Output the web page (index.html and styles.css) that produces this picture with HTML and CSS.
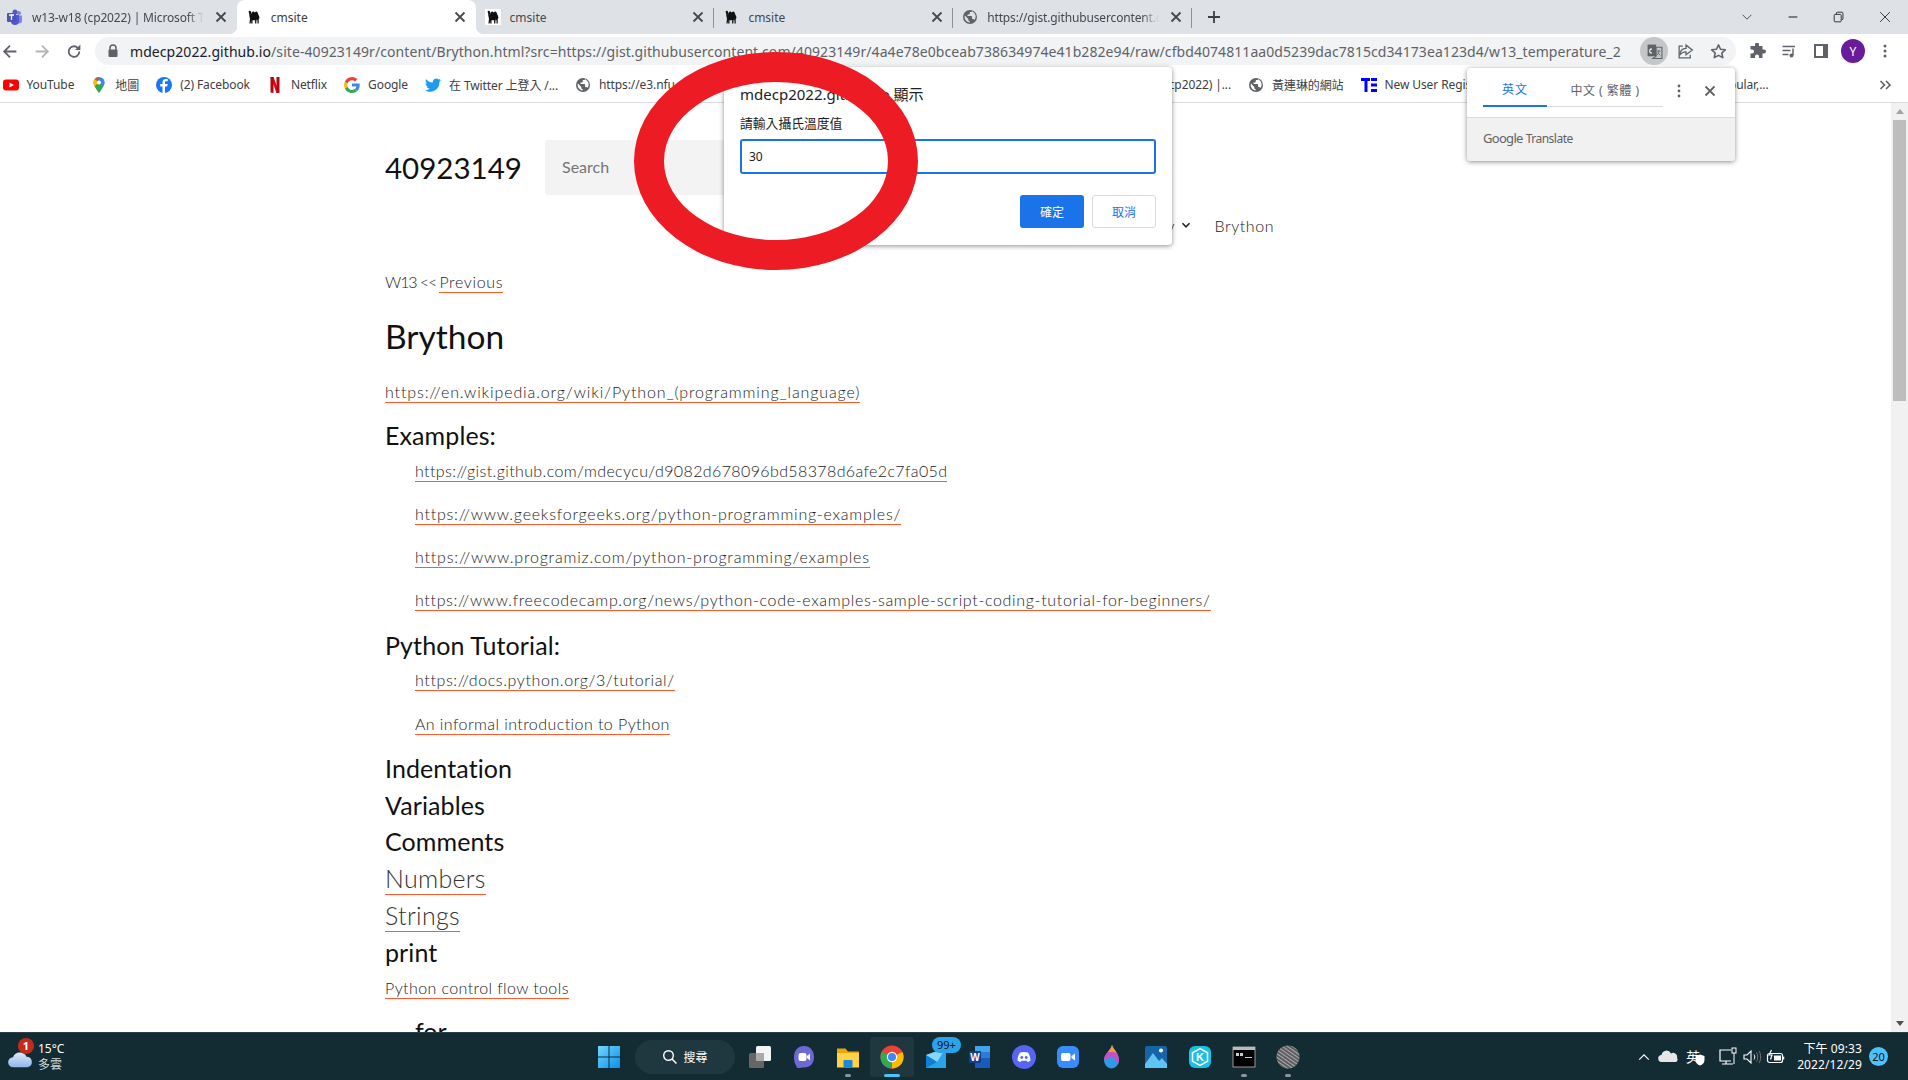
FILE: index.html
```html
<!DOCTYPE html>
<html lang="zh-Hant">
<head>
<meta charset="utf-8">
<title>cmsite</title>
<link rel="stylesheet" href="styles.css">
</head>
<body>
<svg class="defs" width="0" height="0">
  <symbol id="camel" viewBox="0 0 16 16"><path d="M2.5 2.5c.8-1.2 2.3-.8 2.6.4.3 1.200-.3 1.800-.3 3 .6-1.800 1.500-3.600 2.700-3.300.6.200.8.800 1.200.8.500 0 .7-1.200 1.800-1 1.400.3 1.500 2.700 2.300 4.200.5 1 .8 1.900.4 2.900l-.5.500v4.500h-1.200v-3.100l-.9-1-.3 4.100H9.100v-3.300H6.500v3.300H5.200v-3.300l-.6 3.300H3.400l.6-4.800C3.300 7.300 3.200 5.500 3.100 4.200z"/></symbol>
  <symbol id="globe" viewBox="0 0 16 16"><path fill-rule="evenodd" d="M8 1a7 7 0 1 0 0 14A7 7 0 0 0 8 1zM2.600 8c0-.6.100-1.100.3-1.600L6.300 10v.8c0 .8.700 1.500 1.500 1.500v1.100A5.400 5.400 0 0 1 2.600 8zm9.700 3.100c-.2-.6-.8-1.100-1.400-1.100h-.8V7.700a.8.8 0 0 0-.8-.8H5.500V5.400h1.500c.5 0 .8-.4.800-.8V3h1.100c.8 0 1.500-.7 1.500-1.500l0 1.100a5.400 5.400 0 0 1 1.900 8.500z"/></symbol>
  <symbol id="x" viewBox="0 0 16 16"><path d="M3.500 3.500l9 9m0-9l-9 9" fill="none" stroke="currentColor" stroke-width="1.800"/></symbol>
</svg>

<div class="browser">
  <div class="tabstrip">
    <div class="tab tab-sep">
      <svg class="fav" viewBox="0 0 16 16"><circle cx="12" cy="4" r="2" fill="#7b83eb"/><path d="M9 6.500h6v5a3 3 0 0 1-6 0z" fill="#7b83eb"/><circle cx="8" cy="3" r="2.500" fill="#5059c9"/><path d="M4 6h8v6a4 4 0 0 1-8 0z" fill="#5059c9"/><rect x="0" y="4" width="9" height="9" rx="1" fill="#4b53bc"/><path d="M2 6h5M4.500 6v5" stroke="#fff" stroke-width="1.300"/></svg>
      <span class="tab-title fade">w13-w18 (cp2022) | Microsoft Teams</span>
      <svg class="tab-x"><use href="#x"/></svg>
    </div>
    <div class="tab active">
      <svg class="fav"><use href="#camel"/></svg>
      <span class="tab-title">cmsite</span>
      <svg class="tab-x"><use href="#x"/></svg>
    </div>
    <div class="tab tab-sep">
      <svg class="fav fav-white"><use href="#camel"/></svg>
      <span class="tab-title">cmsite</span>
      <svg class="tab-x"><use href="#x"/></svg>
    </div>
    <div class="tab tab-sep">
      <svg class="fav"><use href="#camel"/></svg>
      <span class="tab-title">cmsite</span>
      <svg class="tab-x"><use href="#x"/></svg>
    </div>
    <div class="tab tab-sep">
      <svg class="fav gray"><use href="#globe"/></svg>
      <span class="tab-title fade">https://gist.githubusercontent.com/40923149r</span>
      <svg class="tab-x"><use href="#x"/></svg>
    </div>
    <svg class="newtab" viewBox="0 0 16 16"><path d="M8 2v12M2 8h12" stroke="#3c4043" stroke-width="1.800"/></svg>
    <div class="winctl">
      <svg viewBox="0 0 16 16"><path d="M3 5.500l5 5 5-5" fill="none" stroke="#3c4043"/></svg>
      <svg viewBox="0 0 16 16"><path d="M3 8h10" stroke="#222" stroke-width="1.200"/></svg>
      <svg viewBox="0 0 16 16"><path d="M5 5V3.500C5 3 5.400 2.500 6 2.500h5.500c.6 0 1 .5 1 1V10c0 .6-.4 1-1 1H11M3.500 5h6c.6 0 1 .4 1 1v6.500c0 .6-.4 1-1 1h-6c-.6 0-1-.4-1-1V6c0-.6.4-1 1-1z" fill="none" stroke="#222"/></svg>
      <svg viewBox="0 0 16 16"><path d="M2.500 2.500l11 11m0-11l-11 11" stroke="#222"/></svg>
    </div>
  </div>

  <div class="toolbar">
    <div class="navbtns">
      <svg viewBox="0 0 16 16"><path d="M14 8H3M8 2.500L2.500 8 8 13.500" fill="none" stroke="#5f6368" stroke-width="1.700"/></svg>
      <svg viewBox="0 0 16 16"><path d="M2 8h11M8 2.500L13.500 8 8 13.500" fill="none" stroke="#b3b5b8" stroke-width="1.700"/></svg>
      <svg viewBox="0 0 16 16"><path d="M13 8a5 5 0 1 1-1.500-3.500" fill="none" stroke="#5f6368" stroke-width="1.700"/><path d="M14 1.500v5H9z" fill="#5f6368"/></svg>
    </div>
    <div class="omnibox">
      <svg class="lock" viewBox="0 0 16 16"><path d="M5 7V5a3 3 0 0 1 6 0v2" fill="none" stroke="#5f6368" stroke-width="1.500"/><rect x="3.500" y="6.500" width="9" height="7.500" rx="1" fill="#5f6368"/></svg>
      <div class="url"><b>mdecp2022.github.io</b>/site-40923149r/content/Brython.html?src=https://gist.githubusercontent.com/40923149r/4a4e78e0bceab738634974e41b282e94/raw/cfbd4074811aa0d5239dac7815cd34173ea123d4/w13_temperature_2</div>
      <div class="omni-tr">
        <svg viewBox="0 0 16 16"><rect x="1.500" y="1.500" width="8" height="11" fill="#5f6368"/><path d="M9.500 4h5.500v10.500H6.500l3-2z" fill="none" stroke="#5f6368"/><path d="M5.500 9.500a2 2 0 1 1 0-4" fill="none" stroke="#fff"/><path d="M10.500 7.500h3M12 7v1c0 1.500-1 3-2 3.500M11 9c.5 1 1.500 2 2.500 2.500" fill="none" stroke="#5f6368" stroke-width=".8"/></svg>
      </div>
      <svg class="omni-ic" viewBox="0 0 16 16"><path d="M8.500 2l6 4.500-6 4.500V8.300C5.500 8.300 3.800 9.500 2.500 11.500c.3-4 2.500-6.300 6-6.500z" fill="none" stroke="#5f6368" stroke-width="1.200"/><path d="M5.500 3H2v11h10.500v-3" fill="none" stroke="#5f6368" stroke-width="1.200"/></svg>
      <svg class="omni-ic" viewBox="0 0 16 16"><path d="M8 1.800l1.900 4.100 4.500.5-3.300 3 .9 4.400L8 11.600l-4 2.200.9-4.400-3.300-3 4.500-.5z" fill="none" stroke="#5f6368" stroke-width="1.500" stroke-linejoin="round"/></svg>
    </div>
    <div class="exts">
      <svg viewBox="0 0 16 16"><path d="M6 1.500a2 2 0 0 1 4 0V3h3.500v3.500H15a2 2 0 0 1 0 4h-1.500V15H10v-1.500a2 2 0 0 0-4 0V15H1.500v-4.500H3a2 2 0 0 0 0-4H1.500V3H6z" fill="#5f6368"/></svg>
      <svg viewBox="0 0 16 16"><path d="M1.500 3.500H14M1.500 7.500h8M1.500 11.500h6" stroke="#5f6368" stroke-width="1.500"/><path d="M12 5.500V12" stroke="#5f6368" stroke-width="1.500"/><circle cx="10.500" cy="12.500" r="2" fill="#5f6368"/></svg>
      <svg viewBox="0 0 16 16"><rect x="1" y="1" width="14" height="14" fill="#5f6368"/><rect x="3" y="3" width="7" height="10" fill="#fff"/></svg>
      <div class="avatar">Y</div>
      <svg viewBox="0 0 16 16"><circle cx="8" cy="3" r="1.500" fill="#5f6368"/><circle cx="8" cy="8" r="1.500" fill="#5f6368"/><circle cx="8" cy="13" r="1.500" fill="#5f6368"/></svg>
    </div>
  </div>

  <div class="bookmarks">
    <div class="bm"><svg viewBox="0 0 16 16"><rect x="0" y="2.500" width="16" height="11" rx="3" fill="#f00"/><path d="M6.500 5.500L11 8l-4.500 2.500z" fill="#fff"/></svg><span>YouTube</span></div>
    <div class="bm"><svg viewBox="0 0 16 16"><path d="M8 0a5.500 5.500 0 0 0-5.500 5.500C2.500 9.500 8 16 8 16s5.500-6.500 5.500-10.500A5.500 5.500 0 0 0 8 0z" fill="#34a853"/><path d="M4 2L12 9.500c.8-1.400 1.500-2.800 1.500-4A5.500 5.500 0 0 0 11 1z" fill="#4285f4"/><path d="M2.500 5.500c0 1 .5 2.400 1.200 3.700L8 5.500 4 2a5.500 5.500 0 0 0-1.500 3.500z" fill="#fbbc04"/><path d="M8 0a5.500 5.500 0 0 0-4 2l2.300 2z" fill="#ea4335"/><circle cx="8" cy="5.500" r="2" fill="#fff"/></svg><span>地圖</span></div>
    <div class="bm"><svg viewBox="0 0 16 16"><circle cx="8" cy="8" r="8" fill="#1877f2"/><path d="M9 16V9.500h2.200l.4-2.500H9V5.500c0-.8.300-1.300 1.400-1.300h1.300V2c-.5 0-1.200-.1-1.900-.1-2 0-3.300 1.200-3.300 3.300V7H4.200v2.500h2.300V16z" fill="#fff"/></svg><span>(2) Facebook</span></div>
    <div class="bm"><svg viewBox="0 0 16 16"><path d="M3.500 0h3l6 16h-3z" fill="#e50914"/><path d="M3.500 0h3v16l-3-.6zM9.500 0h3v15.400l-3 .6z" fill="#b1060f"/></svg><span>Netflix</span></div>
    <div class="bm"><svg viewBox="0 0 16 16"><path d="M15.700 8.200c0-.6 0-1.100-.1-1.600H8v3h4.400a3.700 3.700 0 0 1-1.600 2.500l2.500 1.900c1.500-1.400 2.400-3.400 2.400-5.800z" fill="#4285f4"/><path d="M8 16c2.200 0 4-.7 5.300-2l-2.500-1.900c-.7.500-1.600.8-2.800.8-2.100 0-3.900-1.400-4.500-3.400L.9 11.500A8 8 0 0 0 8 16z" fill="#34a853"/><path d="M3.500 9.500a4.800 4.800 0 0 1 0-3L.9 4.500a8 8 0 0 0 0 7z" fill="#fbbc04"/><path d="M8 3.200c1.200 0 2.200.4 3 1.200l2.300-2.300A8 8 0 0 0 .9 4.500l2.600 2C4.100 4.600 5.900 3.200 8 3.200z" fill="#ea4335"/></svg><span>Google</span></div>
    <div class="bm"><svg viewBox="0 0 16 16"><path d="M16 3.100c-.6.300-1.200.4-1.900.5.700-.4 1.200-1 1.400-1.800-.6.400-1.300.7-2 .8a3.300 3.300 0 0 0-5.600 3C5.200 5.500 2.800 4.200 1.100 2.200c-.9 1.500-.4 3.400 1 4.400-.5 0-1-.2-1.500-.4 0 1.600 1.100 3 2.600 3.300-.5.100-1 .1-1.500 0 .4 1.300 1.600 2.200 3.100 2.300A6.600 6.600 0 0 1 0 13.200 9.300 9.300 0 0 0 14.400 5c.6-.5 1.200-1.100 1.600-1.900z" fill="#1d9bf0"/></svg><span>在 Twitter 上登入 /...</span></div>
    <div class="bm"><svg class="gray"><use href="#globe"/></svg><span>https://e3.nfu.edu.tw</span></div>
    <div class="bm bm-mid"><span>w13-w18 (cp2022) |...</span></div>
    <div class="bm"><svg class="gray"><use href="#globe"/></svg><span>黃連琳的網站</span></div>
    <div class="bm bm-new"><svg viewBox="0 0 16 16"><path d="M0 1h9v3H6.500v11h-3V4H0zM10 1h6v3h-6zM10 6.500h6v3h-6zM10 12h6v3h-6z" fill="#00f"/></svg><span>New User Registration</span></div>
    <div class="bm bm-last"><span>Popular,...</span></div>
    <svg class="more" viewBox="0 0 16 16"><path d="M3.500 4l4 4-4 4M9 4l4 4-4 4" fill="none" stroke="#5f6368" stroke-width="1.600"/></svg>
  </div>

  <div class="viewport">
    <main class="page">
      <header class="site-head">
        <div class="brand">40923149</div>
        <div class="search">Search</div>
        <nav class="nav">
          <span>Summary</span>
          <svg class="caret" viewBox="0 0 10 10"><path d="M1.500 3.200L5 6.800l3.500-3.600" fill="none" stroke="#222" stroke-width="1.500"/></svg>
          <span class="nav-link">Brython</span>
        </nav>
      </header>
      <p class="crumb">W13 &lt;&lt; <a href="#">Previous</a></p>
      <h1 class="title">Brython</h1>
      <p class="wiki"><a href="#">https://en.wikipedia.org/wiki/Python_(programming_language)</a></p>
      <h2 class="sec sec-ex">Examples:</h2>
      <ul class="links links-ex">
        <li class="sp-gist"><a href="#">https://gist.github.com/mdecycu/d9082d678096bd58378d6afe2c7fa05d</a></li>
        <li class="sp-geeks"><a href="#">https://www.geeksforgeeks.org/python-programming-examples/</a></li>
        <li class="sp-prog"><a href="#">https://www.programiz.com/python-programming/examples</a></li>
        <li class="sp-fcc"><a href="#">https://www.freecodecamp.org/news/python-code-examples-sample-script-coding-tutorial-for-beginners/</a></li>
      </ul>
      <h2 class="sec sec-tut">Python Tutorial:</h2>
      <ul class="links links-tut">
        <li class="sp-docs"><a href="#">https://docs.python.org/3/tutorial/</a></li>
        <li class="sp-intro"><a href="#">An informal introduction to Python</a></li>
      </ul>
      <div class="topics">
        <h3>Indentation</h3>
        <h3>Variables</h3>
        <h3>Comments</h3>
        <h3><a href="#">Numbers</a></h3>
        <h3><a href="#">Strings</a></h3>
        <h3>print</h3>
      </div>
      <p class="flow"><a href="#">Python control flow tools</a></p>
      <h3 class="sub">for</h3>
    </main>
    <div class="scrollbar">
      <div class="arrow-up"></div>
      <div class="thumb"></div>
      <div class="arrow-down"></div>
    </div>
  </div>
</div>

<footer class="taskbar">
  <div class="weather">
    <div class="cloud">
      <svg viewBox="0 0 28 24"><path d="M7 21a5.500 5.500 0 0 1-.5-11A8 8 0 0 1 21 9.500 5.800 5.800 0 0 1 22 21z" fill="url(#cl)"/><defs><linearGradient id="cl" x1="0" y1="0" x2="0" y2="1"><stop offset="0" stop-color="#dfe9f7"/><stop offset="1" stop-color="#8fb6ea"/></linearGradient></defs></svg>
      <span class="wbadge">1</span>
    </div>
    <div class="wtext"><span>15°C</span><span class="wdim">多雲</span></div>
  </div>
  <div class="apps">
    <div class="app"><svg viewBox="0 0 24 24"><defs><linearGradient id="w" x1="0" y1="0" x2="1" y2="1"><stop offset="0" stop-color="#6fd8ff"/><stop offset="1" stop-color="#0a8fe8"/></linearGradient></defs><path d="M1 1h10.500v10.500H1zM12.500 1H23v10.500H12.500zM1 12.500h10.500V23H1zM12.500 12.500H23V23H12.500z" fill="url(#w)"/></svg></div>
    <div class="pill"><svg viewBox="0 0 16 16"><circle cx="6.500" cy="6.500" r="4.800" fill="none" stroke="#fff" stroke-width="1.400"/><path d="M10 10l4.500 4.500" stroke="#fff" stroke-width="1.500"/></svg><span>搜尋</span></div>
    <div class="app"><svg viewBox="0 0 24 24"><rect x="1" y="8" width="15" height="15" rx="1.500" fill="#666"/><rect x="8" y="1" width="15" height="15" rx="1.500" fill="#f4f4f4"/><rect x="8" y="8" width="8" height="8" fill="#aaa"/></svg></div>
    <div class="app"><svg viewBox="0 0 24 24"><path d="M12 1c6 0 10 4.500 10 11s-4 10.500-10 10.500c-1.500 0-4 .5-6 .5-1.500 0-1.500-1-1.500-2C2.500 19 2 15.500 2 12 2 5.500 6 1 12 1z" fill="#6b69d6"/><rect x="6.500" y="8" width="8" height="8" rx="2" fill="#fff"/><path d="M15 11l3-2.500v7L15 13z" fill="#fff"/></svg></div>
    <div class="app dot"><svg viewBox="0 0 24 24"><path d="M1 3.500h8.500l2.500 3H23v4H1z" fill="#e8a80c"/><path d="M1 8h22v14.500H1z" fill="#ffd24a"/><rect x="7.500" y="15" width="9" height="7.500" rx="1" fill="#1e88d6"/></svg></div>
    <div class="app running"><svg viewBox="0 0 24 24"><circle cx="12" cy="12" r="11.500" fill="#ea4335"/><path d="M12 12L22.500 7A11.500 11.500 0 0 1 12 23.500z" fill="#fbbc04"/><path d="M12 12L12 23.500A11.500 11.500 0 0 1 1.800 6.500z" fill="#34a853"/><circle cx="12" cy="12" r="5.200" fill="#fff"/><circle cx="12" cy="12" r="4" fill="#4285f4"/></svg></div>
    <div class="app"><svg viewBox="0 0 24 24"><path d="M2 10L22 3v20H2z" fill="#2aa3ea"/><path d="M2 10l11 7 9-14z" fill="#8ad4f7"/><path d="M2 10l11 7-11 6z" fill="#0f7fd4"/></svg><span class="mailbadge">99+</span></div>
    <div class="app"><svg viewBox="0 0 24 24"><path d="M7 1h15v22H7z" fill="#185abd"/><path d="M7 1h15v6H7z" fill="#41a5ee"/><path d="M7 7h15v6H7z" fill="#2b7cd3"/><rect x="1" y="6" width="12" height="12" rx="1" fill="#103f91"/><text x="7" y="15.500" class="wordw">W</text></svg></div>
    <div class="app"><svg viewBox="0 0 24 24"><circle cx="12" cy="12" r="12" fill="#5865f2"/><path d="M8 7.500c2.500-.8 5.500-.8 8 0 1.500 2 2.500 5 2.500 8-1 .8-2 1.200-3 1.500l-.8-1.300H9.300L8.500 17c-1-.3-2-.7-3-1.500 0-3 1-6 2.500-8z" fill="#fff"/><circle cx="9.800" cy="12.500" r="1.400" fill="#5865f2"/><circle cx="14.200" cy="12.500" r="1.400" fill="#5865f2"/></svg></div>
    <div class="app"><svg viewBox="0 0 24 24"><rect x="1" y="1" width="22" height="22" rx="6" fill="#3a8bfb"/><rect x="5" y="8" width="9.500" height="8" rx="2" fill="#fff"/><path d="M15.500 11l3.500-2.500v7L15.500 13z" fill="#fff"/></svg></div>
    <div class="app"><svg viewBox="0 0 24 24"><path d="M12 0c1 4 7 8 7 15a7.500 8.500 0 0 1-15 0C4 9 11 5 12 0z" fill="#2f9be8"/><path d="M12 0c1 4 7 8 7 15 0 2-.6 3.500-1.500 5C17 14 12 10 10 12 7.500 14 6 15 4 15c0-6 7-10 8-15z" fill="#c94fc0"/><path d="M12 0c.5 2.500 3 5 4.500 8C13 6 11 7 8 7c2-2 3.500-4.500 4-7z" fill="#f4a12a"/></svg></div>
    <div class="app"><svg viewBox="0 0 24 24"><rect x="1" y="1" width="22" height="22" rx="2" fill="#1565a8"/><path d="M1 23V19L9 8l6 8 3-3 5 6v4z" fill="#5ec4f4"/><circle cx="17" cy="5.500" r="2" fill="#fff"/></svg></div>
    <div class="app"><svg viewBox="0 0 24 24"><rect x="1" y="1" width="22" height="22" rx="6" fill="#19c0e8"/><path d="M12 3.500l7.500 4.300v8.400L12 20.500l-7.500-4.300V7.800z" fill="none" stroke="#fff" stroke-width="1.500"/><text x="12" y="16" class="kk">K</text></svg></div>
    <div class="app dot"><svg viewBox="0 0 24 24"><rect x="1" y="2" width="22" height="20" fill="#000" stroke="#999"/><rect x="1" y="2" width="22" height="3" fill="#bbb"/><path d="M4 8h3v3H4zM8 8h3v3H8zM13 12h7v1h-7z" fill="#ccc"/></svg></div>
    <div class="app dot"><svg viewBox="0 0 24 24"><defs><pattern id="st" width="3" height="3" patternUnits="userSpaceOnUse" patternTransform="rotate(35)"><rect width="3" height="3" fill="#555"/><rect width="3" height="1.200" fill="#aaa"/></pattern></defs><circle cx="12" cy="12" r="11.500" fill="url(#st)"/></svg></div>
  </div>
  <div class="tray">
    <svg class="t-chev" viewBox="0 0 16 16"><path d="M2.500 11L8 5.500l5.500 5.500" fill="none" stroke="#fff" stroke-width="1.300"/></svg>
    <svg class="t-ic" viewBox="0 0 20 16"><path d="M4 13a3.500 3.500 0 0 1-.5-7A5 5 0 0 1 13 4.500 4 4 0 0 1 19 9a2.500 2.500 0 0 1-1 4z" fill="#e6e6e6"/></svg>
    <div class="t-lang"><span>英</span><svg viewBox="0 0 10 12"><path d="M5 .5l4.500 1.500v4c0 3-2 4.500-4.500 5.500C2.500 10.500.5 9 .5 6V2z" fill="#fff"/></svg></div>
    <svg class="t-ic" viewBox="0 0 20 20"><path d="M13 3H2v11h11M8 14v3M4 17h11" fill="none" stroke="#fff" stroke-width="1.200"/><rect x="14" y="1" width="4" height="5" fill="none" stroke="#fff"/><path d="M16 6v11" stroke="#fff"/></svg>
    <svg class="t-ic" viewBox="0 0 20 16"><path d="M2 6h3l4-4v12l-4-4H2z" fill="none" stroke="#fff" stroke-width="1.100"/><path d="M12 5.500c1 1.500 1 3.500 0 5" fill="none" stroke="#fff"/><path d="M14.500 3.500c1.700 2.700 1.700 6.300 0 9M17 2c2.200 3.500 2.200 8.500 0 12" fill="none" stroke="#777"/></svg>
    <svg class="t-ic" viewBox="0 0 20 16"><rect x="1.500" y="4.500" width="15" height="9" rx="2" fill="none" stroke="#fff" stroke-width="1.200"/><rect x="8" y="6.500" width="7" height="5" fill="#fff"/><path d="M17.500 7.500v3" stroke="#fff" stroke-width="1.500"/><path d="M5.500 1L3 6h3L4.500 10.500" fill="none" stroke="#fff" stroke-width="1.200"/></svg>
    <div class="clock"><span>下午 09:33</span><span>2022/12/29</span></div>
    <div class="notif">20</div>
  </div>
</footer>

<div class="dialog">
  <div class="dlg-title">mdecp2022.github.io 顯示</div>
  <div class="dlg-label">請輸入攝氏溫度值</div>
  <div class="dlg-input">30</div>
  <div class="dlg-btns">
    <div class="btn btn-ok">確定</div>
    <div class="btn btn-cancel">取消</div>
  </div>
</div>

<div class="ring"></div>

<div class="translate">
  <div class="tr-top">
    <div class="tr-tabs">
      <div class="tr-tab on">英文</div>
      <div class="tr-tab">中文 ( 繁體 )</div>
    </div>
    <svg class="tr-ic" viewBox="0 0 16 16"><circle cx="8" cy="3" r="1.400" fill="#5f6368"/><circle cx="8" cy="8" r="1.400" fill="#5f6368"/><circle cx="8" cy="13" r="1.400" fill="#5f6368"/></svg>
    <svg class="tr-ic tr-close"><use href="#x"/></svg>
  </div>
  <div class="tr-foot"><span class="gl">Google</span> <span class="tl">Translate</span></div>
</div>
</body>
</html>
```
FILE: styles.css
```css
* { box-sizing: border-box; }
html, body { margin: 0; padding: 0; height: 1080px; overflow: hidden; background: #fff; }
body { font-family: "Noto Sans", "Noto Sans CJK TC", sans-serif; color: #202124; position: relative; }
.defs { position: absolute; }
svg { display: block; flex: none; }

.browser { height: 1032px; display: flex; flex-direction: column; }

/* tab strip */
.tabstrip { height: 34px; flex: none; background: #dee1e6; display: flex; align-items: stretch; margin-left: -2px; width: 1910px; }
.tab { width: 238.800px; flex: none; display: flex; align-items: center; padding: 0 8px 0 9px; gap: 9px; position: relative; font-size: 12px; color: #45494e; }
.tab.active { background: #fff; border-radius: 8px 8px 0 0; color: #3c4043; }
.tab.active::before, .tab.active::after { content: ""; position: absolute; bottom: 0; width: 8px; height: 8px; }
.tab.active::before { left: -8px; background: radial-gradient(circle at 0 0, #dee1e6 8px, #fff 8.5px); }
.tab.active::after { right: -8px; background: radial-gradient(circle at 100% 0, #dee1e6 8px, #fff 8.5px); }
.tab-sep::after { content: ""; position: absolute; right: 0; top: 8px; height: 20px; width: 1px; background: #8d9095; }
.tab:first-child::after { display: none; }
.fav { width: 16px; height: 16px; fill: #111; }
.fav-white { background: #fff; }
.gray { fill: #5f6368; }
.tab-title { flex: 1; min-width: 0; white-space: nowrap; overflow: hidden; }
.fade { letter-spacing: -.15px; -webkit-mask-image: linear-gradient(90deg, #000 90%, transparent); mask-image: linear-gradient(90deg, #000 90%, transparent); }
.tab-x { width: 16px; height: 16px; color: #45494e; }
.newtab { width: 16px; height: 16px; align-self: center; margin-left: 14px; }
.winctl { margin-left: auto; display: flex; align-items: center; }
.winctl svg { width: 46px; height: 14px; }

/* toolbar */
.toolbar { height: 34px; flex: none; display: flex; align-items: center; background: #fff; }
.navbtns { display: flex; margin-left: -6px; }
.navbtns svg { width: 32px; height: 17px; }
.omnibox { width: 1641px; margin-left: 5px; height: 28px; border-radius: 14px; background: #f1f3f4; display: flex; align-items: center; padding: 0 4px 0 10px; }
.lock { width: 16px; height: 16px; }
.url { flex: 1; min-width: 0; margin-left: 9px; font-size: 14px; letter-spacing: .07px; color: #5f6368; white-space: nowrap; overflow: hidden; }
.url b { font-weight: 400; color: #202124; }
.omni-tr { width: 28px; height: 28px; border-radius: 50%; background: #c4c6c8; display: flex; align-items: center; justify-content: center; margin-left: 6px; }
.omni-tr svg { width: 17px; height: 17px; }
.omni-ic { width: 17px; height: 17px; margin-left: 9px; margin-right: 9px; }
.omni-ic:last-child { margin: 0 5px 0 7px; }
.exts { display: flex; align-items: center; margin-left: 5px; }
.exts > svg { width: 32px; height: 16px; }
.avatar { width: 24px; height: 24px; margin: 0 4px; border-radius: 50%; background: #6a1b9a; color: #fff; font-size: 12px; display: flex; align-items: center; justify-content: center; }

/* bookmarks */
.bookmarks { height: 35px; flex: none; display: flex; align-items: center; border-bottom: 1px solid #dadce0; padding-bottom: 1px; background: #fff; margin-left: -6px; width: 1914px; font-size: 12px; color: #3c4043; }
.bm { display: flex; align-items: center; gap: 8px; padding: 0 8.500px; white-space: nowrap; letter-spacing: -.1px; }
.bm svg { width: 16px; height: 16px; }
.bm-mid { flex: 1; justify-content: flex-end; overflow: hidden; }
.bm-new { width: 273px; }
.bm-last { width: 152px; justify-content: flex-end; }
.more { width: 16px; height: 16px; margin: 0 15px 0 100px; }

/* page */
.viewport { flex: 1; min-height: 0; display: flex; }
.page { flex: 1; min-width: 0; overflow: hidden; padding: 37px 0 0 385px; font-family: Lato, "Noto Sans CJK TC", sans-serif; color: #1c1c1c; font-size: 16px; font-weight: 300; }
.scrollbar { width: 17px; flex: none; background: #f1f1f1; display: flex; flex-direction: column; align-items: center; }
.arrow-up { margin-top: 6px; border: 4px solid transparent; border-top: 0; border-bottom: 5px solid #a3a3a3; width: 0; }
.thumb { width: 13px; height: 281px; margin-top: 6px; background: #bdbdbd; }
.arrow-down { margin-top: auto; margin-bottom: 6px; border: 4px solid transparent; border-bottom: 0; border-top: 5px solid #505050; width: 0; }
a { color: inherit; text-decoration: none; border-bottom: 1px solid #ff5a2b; padding-bottom: 1px; }

.site-head { width: 889px; display: flex; flex-wrap: wrap; align-items: center; }
.brand { font-size: 29.500px; font-weight: 400; color: #111; width: 135px; margin-right: 25px; white-space: nowrap; }
.search { width: 400px; height: 55px; background: #f3f3f3; border-radius: 3px; padding: 0 0 2px 17px; display: flex; align-items: center; color: #757575; font-size: 16px; font-weight: 400; }
.nav { flex: 0 0 100%; height: 30px; margin-top: 15px; display: flex; align-items: center; justify-content: flex-end; font-size: 16px; font-weight: 300; }
.caret { width: 10px; height: 10px; margin: 0 24px 0 6px; }
.nav-link { color: #222; letter-spacing: .55px; }

.crumb { margin: 30px 0 0; line-height: 24px; letter-spacing: -1.100px; }
.crumb a { letter-spacing: .65px; }
.title { margin: 22px 0 0; font-size: 33.500px; line-height: 40px; font-weight: 400; color: #111; }
.wiki { margin: 24px 0 0; line-height: 24px; letter-spacing: .87px; }
.sec { margin: 16px 0 0; font-size: 25px; line-height: 30px; font-weight: 400; color: #111; letter-spacing: .1px; }
.sec-tut { margin-top: 18px; }
.links { list-style: none; margin: 9px 0 0; padding: 0 0 0 30px; display: flex; flex-direction: column; gap: 19px; line-height: 24px; }
.links-tut { margin-top: 8px; gap: 20px; }
.sp-gist { letter-spacing: .38px; }
.sp-geeks { letter-spacing: .76px; }
.sp-prog { letter-spacing: .8px; }
.sp-fcc { letter-spacing: .66px; }
.sp-docs { letter-spacing: .6px; }
.sp-intro { letter-spacing: .43px; }
.topics { margin-top: 14px; }
.topics h3 { margin: 0; font-size: 25px; line-height: 36.700px; font-weight: 400; color: #111; letter-spacing: .1px; }
.topics h3 a { font-weight: 300; color: #333; letter-spacing: .3px; }
.flow { margin: 6px 0 0; line-height: 24px; letter-spacing: .4px; }
.sub { margin: 13px 0 0 30px; font-size: 25px; line-height: 37px; font-weight: 400; color: #111; }

/* taskbar */
.taskbar { height: 48px; background: #132b33; border-top: 1px solid #2c4048; display: flex; align-items: center; color: #fff; }
.weather { width: 587px; flex: none; display: flex; align-items: center; padding-left: 7px; }
.cloud { width: 24px; height: 24px; position: relative; margin-top: 4px; }
.cloud svg { width: 26px; height: 24px; }
.wbadge { position: absolute; left: 11px; top: -9px; width: 16px; height: 16px; border-radius: 50%; background: #c42b1c; color: #fff; font-size: 11px; font-weight: 700; line-height: 16px; text-align: center; }
.wtext { display: flex; flex-direction: column; margin-left: 7px; font-size: 12px; line-height: 16px; }
.wdim { color: #d5dadc; }
.apps { display: flex; align-items: center; }
.app { width: 44px; height: 40px; display: flex; align-items: center; justify-content: center; position: relative; }
.app svg { width: 24px; height: 24px; }
.pill { width: 100px; height: 34px; margin: 0 3px 0 4px; border-radius: 17px; background: #1f373e; display: flex; align-items: center; justify-content: center; gap: 5px; font-size: 12px; }
.pill svg { width: 16px; height: 16px; }
.dot::after, .running::after { content: ""; position: absolute; bottom: 0; left: 50%; transform: translateX(-50%); height: 3px; border-radius: 2px; }
.dot::after { width: 6px; background: #8b979b; }
.running { background: #1f373e; border-radius: 4px; }
.running::after { width: 16px; background: #4cc2ff; }
.mailbadge { position: absolute; left: 18px; top: 0; height: 16px; padding: 0 5px; border-radius: 8px; background: #2aa3ea; color: #111; font-size: 11px; line-height: 16px; }
.wordw { font: 700 10px "Liberation Sans", sans-serif; fill: #fff; text-anchor: middle; }
.kk { font: 700 11px "Liberation Sans", sans-serif; fill: #fff; text-anchor: middle; }
.tray { flex: 1; display: flex; align-items: center; padding-left: 327px; }
.t-chev { width: 14px; height: 14px; }
.t-ic { width: 20px; height: 20px; margin-left: 7px; }
.t-ic + .t-ic { margin-left: 4px; }
.t-lang { display: flex; align-items: flex-end; margin: 0 6px 0 8px; font-size: 14px; line-height: 18px; }
.t-lang svg { width: 10px; height: 12px; margin-left: -5px; }
.clock { display: flex; flex-direction: column; align-items: flex-end; width: 78px; margin-left: -2px; font-size: 12px; line-height: 16px; letter-spacing: .1px; }
.notif { width: 19px; height: 19px; margin-left: 7px; border-radius: 50%; background: #4cc2ff; color: #111; font-size: 11px; line-height: 19px; text-align: center; }

/* overlays */
.dialog { position: absolute; left: 724px; top: 67px; width: 448px; height: 178px; background: #fff; border-radius: 4px; box-shadow: 0 1px 5px rgba(0,0,0,.45); padding: 16px 16px 0; }
.dlg-title { font-size: 15px; line-height: 22px; color: #202124; }
.dlg-label { margin-top: 8px; font-size: 12.800px; line-height: 20px; color: #202124; }
.dlg-input { margin-top: 6px; height: 35px; border: 2px solid #1a73e8; border-radius: 3px; padding-left: 7px; font-size: 12px; line-height: 31px; color: #202124; }
.dlg-btns { margin-top: 21px; display: flex; justify-content: flex-end; gap: 8px; }
.btn { width: 64px; height: 33px; border-radius: 3px; font-size: 12px; display: flex; align-items: center; justify-content: center; }
.btn-ok { background: #1a73e8; color: #fff; }
.btn-cancel { border: 1px solid #dadce0; color: #1a73e8; }
.ring { position: absolute; left: 634px; top: 52px; width: 284px; height: 218px; border: 30px solid #ed1c24; border-radius: 50%; }
.translate { position: absolute; left: 1467px; top: 68px; width: 268px; height: 93px; background: #fff; border-radius: 4px; box-shadow: 0 1px 5px rgba(0,0,0,.45); overflow: hidden; display: flex; flex-direction: column; }
.tr-top { height: 50px; flex: none; display: flex; align-items: center; padding: 0 0 4px 16px; border-bottom: 1px solid #dadce0; }
.tr-tabs { width: 180px; height: 38px; display: flex; border-bottom: 1px solid #dadce0; align-self: flex-start; margin-top: 1px; padding-top: 4px; font-size: 12px; color: #5f6368; letter-spacing: .5px; }
.tr-tab { flex: 1 1 116px; display: flex; align-items: center; justify-content: center; white-space: nowrap; }
.tr-tab.on { flex: 0 0 64px; color: #1a73e8; border-bottom: 2px solid #1a73e8; margin-bottom: -1px; letter-spacing: 1px; }
.tr-ic { width: 16px; height: 16px; margin-left: 8px; color: #5f6368; }
.tr-close { margin-left: 15px; }
.tr-foot { flex: 1; background: #f1f1f1; display: flex; align-items: center; gap: 3px; padding: 0 0 3px 16px; font-size: 12px; color: #5f6368; }
.gl { font-size: 13px; letter-spacing: -.7px; }
.tl { letter-spacing: -.5px; }
```
